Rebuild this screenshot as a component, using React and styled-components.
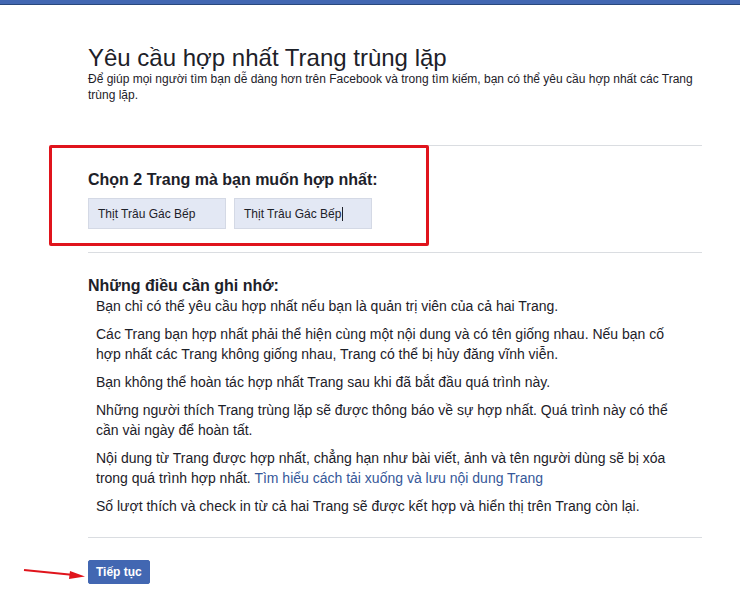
import React from "react";
import styled, { createGlobalStyle } from "styled-components";

const GlobalStyle = createGlobalStyle`
  body {
    margin: 0;
    background: #ffffff;
    font-family: "Liberation Sans", Arial, sans-serif;
    color: #1d2129;
  }
`;

const Page = styled.div`
  position: relative;
  min-height: 596px;
`;

const TopBar = styled.div`
  height: 4px;
  background: #4267b2;
  border-bottom: 1px solid #29487d;
`;

const Content = styled.div`
  width: 614px;
  margin-left: 88px;
`;

const Header = styled.div`
  padding: 40px 0 42px;
`;

const Title = styled.h1`
  margin: 0;
  font-size: 24px;
  font-weight: normal;
  line-height: 26px;
  color: #1d2129;
`;

const Lead = styled.p`
  margin: 0;
  font-size: 12px;
  line-height: 16px;
`;

const Section = styled.div`
  border-top: 1px solid #dadde1;
  padding: ${(p) => p.$pad || "22px 0"};
`;

const SectionTitle = styled.h2`
  margin: 0 0 ${(p) => p.$gap || "0"};
  font-size: 16px;
  font-weight: bold;
  line-height: 20px;
`;

const Inputs = styled.div`
  display: flex;
  gap: 8px;
`;

const PageField = styled.div`
  box-sizing: border-box;
  width: 138px;
  height: 31px;
  padding: 0 9px;
  display: flex;
  align-items: center;
  background: #e3e8f4;
  border: 1px solid #d4d9e5;
  font-size: 12px;
`;

const Caret = styled.span`
  display: inline-block;
  width: 1px;
  height: 14px;
  background: #1d2129;
  margin-left: 1px;
`;

const Notes = styled.div`
  width: 584px;
  padding-left: 8px;
`;

const Note = styled.p`
  margin: 0 0 8px;
  font-size: 14px;
  line-height: 20px;
  &:last-child {
    margin-bottom: 0;
  }
`;

const Link = styled.a`
  color: #365899;
  text-decoration: none;
`;

const Footer = styled.div`
  padding-top: 22px;
`;

const Button = styled.button`
  height: 24px;
  padding: 0 7px;
  background: #4267b2;
  border: 1px solid #4267b2;
  border-radius: 2px;
  color: #ffffff;
  font-family: "Liberation Sans", Arial, sans-serif;
  font-size: 12px;
  font-weight: bold;
`;

// annotations drawn over the screenshot
const Highlight = styled.div`
  position: absolute;
  left: 49px;
  top: 145px;
  width: 380px;
  height: 101px;
  box-sizing: border-box;
  border: 3px solid #e0141c;
  border-radius: 2px;
`;

const ArrowSvg = styled.svg`
  position: absolute;
  left: 20px;
  top: 564px;
`;

const notes = [
  "Bạn chỉ có thể yêu cầu hợp nhất nếu bạn là quản trị viên của cả hai Trang.",
  "Các Trang bạn hợp nhất phải thể hiện cùng một nội dung và có tên giống nhau. Nếu bạn cố hợp nhất các Trang không giống nhau, Trang có thể bị hủy đăng vĩnh viễn.",
  "Bạn không thể hoàn tác hợp nhất Trang sau khi đã bắt đầu quá trình này.",
  "Những người thích Trang trùng lặp sẽ được thông báo về sự hợp nhất. Quá trình này có thể cần vài ngày để hoàn tất.",
];

const App = () => {
  return (
    <Page>
      <GlobalStyle />
      <TopBar />
      <Content>
        <Header>
          <Title>Yêu cầu hợp nhất Trang trùng lặp</Title>
          <Lead>
            Để giúp mọi người tìm bạn dễ dàng hơn trên Facebook và trong tìm
            kiếm, bạn có thể yêu cầu hợp nhất các Trang trùng lặp.
          </Lead>
        </Header>

        <Section $pad="24px 0 23px">
          <SectionTitle $gap="8px">Chọn 2 Trang mà bạn muốn hợp nhất:</SectionTitle>
          <Inputs>
            <PageField>Thịt Trâu Gác Bếp</PageField>
            <PageField>
              Thịt Trâu Gác Bếp
              <Caret />
            </PageField>
          </Inputs>
        </Section>

        <Section $pad="23px 0 21px">
          <SectionTitle>Những điều cần ghi nhớ:</SectionTitle>
          <Notes>
            {notes.map((text) => (
              <Note key={text}>{text}</Note>
            ))}
            <Note>
              Nội dung từ Trang được hợp nhất, chẳng hạn như bài viết, ảnh và
              tên người dùng sẽ bị xóa trong quá trình hợp nhất.{" "}
              <Link href="#">Tìm hiểu cách tải xuống và lưu nội dung Trang</Link>
            </Note>
            <Note>
              Số lượt thích và check in từ cả hai Trang sẽ được kết hợp và hiển
              thị trên Trang còn lại.
            </Note>
          </Notes>
        </Section>

        <Section $pad="0">
          <Footer>
            <Button>Tiếp tục</Button>
          </Footer>
        </Section>
      </Content>

      <Highlight />
      <ArrowSvg width="70" height="20" viewBox="0 0 70 20">
        <line x1="4" y1="6" x2="54" y2="11" stroke="#e0141c" strokeWidth="2" />
        <polygon points="50,7 65,12.5 49,15" fill="#e0141c" />
      </ArrowSvg>
    </Page>
  );
};

export default App;
